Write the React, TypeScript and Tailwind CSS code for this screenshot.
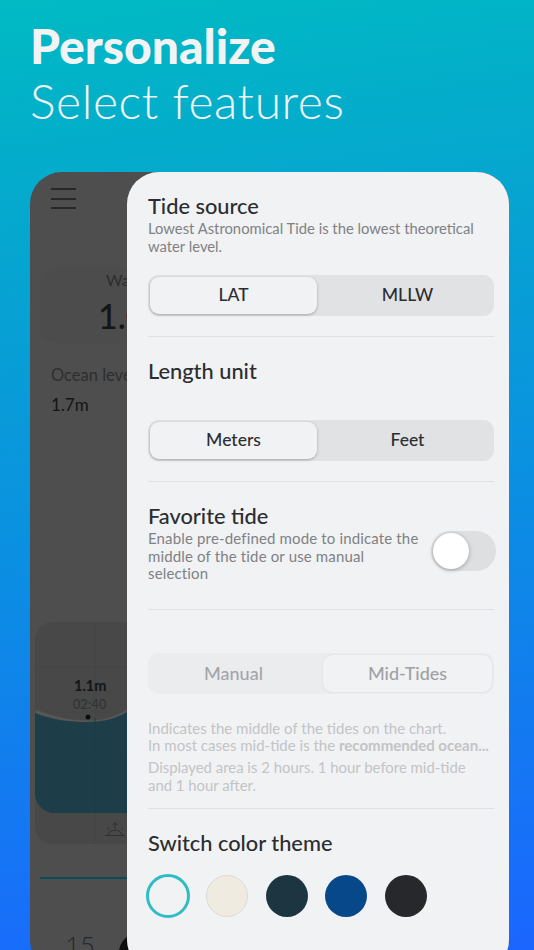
import React from "react";

function Segment({ left, right, active, dim }: { left: string; right: string; active: "left" | "right"; dim?: boolean }) {
  const on = dim
    ? "bg-[#f1f2f4] shadow-[0_0_2px_rgba(0,0,0,0.1)] text-[#9fa1a4] rounded-[9px]"
    : "bg-[#f1f2f4] shadow-[0_1px_3px_rgba(0,0,0,0.28)] text-[#2b2d30] rounded-[9px]";
  const off = dim ? "text-[#a3a5a8]" : "text-[#2b2d30]";
  return (
    <div className={`flex h-[41px] w-[346px] rounded-[11px] p-[2px] font-medium ${dim ? "bg-[#ebecee] text-[18px]" : "bg-[#e1e2e4] text-[17.500px]"}`}>
      <div className={`flex w-[167px] items-center justify-center ${active === "left" ? on : off}`}>{left}</div>
      <div className={`ml-[6px] flex flex-1 items-center justify-center ${active === "right" ? on : off}`}>{right}</div>
    </div>
  );
}

function Divider() {
  return <div className="h-[1px] w-[346px] bg-[#e0e1e3]" />;
}

export default function App() {
  return (
    <div className="h-[950px] w-[534px] overflow-hidden bg-[linear-gradient(172deg,#00bac3_0%,#05a9cd_20%,#0b8fe2_55%,#1b66ff_100%)] font-['Lato',sans-serif]">
      <div className="h-[172px] pl-[30px] pt-[19px] text-[#f2f3f5]">
        <div className="text-[48px] font-black leading-[54px]">Personalize</div>
        <div className="text-[48px] font-light leading-[56px] tracking-[0.6px]">Select features</div>
      </div>

      <div className="relative ml-[30px] h-[800px] w-[479px] rounded-[32px] bg-[#4d4e4d]">
        <div className="pl-[21px] pt-[16px]">
          <div className="flex w-[25px] flex-col gap-[7.5px]">
            <div className="h-[2px] bg-[#26282b]" />
            <div className="h-[2px] bg-[#26282b]" />
            <div className="h-[2px] bg-[#26282b]" />
          </div>
        </div>

        <div className="ml-[10px] mt-[58px] h-[76px] w-[180px] rounded-[16px] bg-[#4b4c4b] pl-[66px] pt-[3px]">
          <div className="whitespace-nowrap text-[16px] leading-[20px] text-[#2c2e30]">Water</div>
          <div className="-ml-[8px] mt-[8px] whitespace-nowrap text-[34px] font-medium leading-[36px] text-[#131517]">1.03m</div>
        </div>

        <div className="whitespace-nowrap pl-[21px] pt-[22px] text-[16.500px] leading-[20px] text-[#2c2e30]">Ocean level</div>
        <div className="pl-[21px] pt-[10px] text-[17px] leading-[20px] text-[#131517]">1.7m</div>

        <div className="relative ml-[5px] mt-[207px] h-[222px] w-[180px] overflow-hidden rounded-[18px] bg-[#474847]">
          <svg className="absolute left-0 top-0" width="180" height="222" viewBox="0 0 180 222" fill="none">
            <path d="M60 0V222M0 45H180M0 90H180M0 135H180" stroke="#454645" strokeWidth="1" />
            <path d="M0 90C18 97 35 101 52 101C70 101 82 97 92 90" stroke="#555655" strokeWidth="5" />
            <path d="M0 91C18 98 35 100 52 100C70 100 82 96 92 90V191H20C9 191 0 182 0 171Z" fill="#1d3d48" />
            <path d="M0 135H92M60 96V191" stroke="#1c3c47" strokeWidth="1" />
            <circle cx="53" cy="95" r="2.500" fill="#0c0d0e" />
            <path d="M70 213.500H90M73 213a7.500 7.500 0 0 1 14 0M80 207V201M77.500 203L80 200.500L82.500 203M72 206L74 207.500M88 206L86 207.500" stroke="#2c2e30" strokeWidth="0.9" />
          </svg>
          <div className="relative pl-[39px] pt-[55px] text-[14.500px] font-bold leading-[18px] text-[#131517]">1.1m</div>
          <div className="relative pl-[38px] pt-[1px] text-[12.500px] leading-[18px] tracking-[0.3px] text-[#2f3133]">02:40</div>
        </div>

        <div className="ml-[10px] mt-[33px] h-[2px] w-[170px] bg-[#0e4a5c]" />

        <div className="relative pl-[35px] pt-[53px] text-[26px] font-light leading-[26px] text-[#26282b]">
          15
          <div className="absolute left-[89px] top-[54px] h-[40px] w-[40px] rounded-full bg-[#0d0e10]" />
        </div>

        <div className="absolute bottom-0 left-[97px] right-0 top-0 rounded-[32px] bg-[#f1f2f4] pl-[21px] pt-[21px]">
          <div className="text-[21.800px] font-medium leading-[26px] text-[#2b2d30]">Tide source</div>
          <div className="w-[346px] text-[14.800px] leading-[18px] text-[#7f8184]">
            Lowest Astronomical Tide is the lowest theoretical water level.
          </div>
          <div className="pb-[20px] pt-[20px]">
            <Segment left="LAT" right="MLLW" active="left" />
          </div>
          <Divider />
          <div className="pb-[36px] pt-[21px] text-[21.800px] font-medium leading-[26px] text-[#2b2d30]">Length unit</div>
          <Segment left="Meters" right="Feet" active="left" />
          <div className="pt-[20px]">
            <Divider />
          </div>
          <div className="pt-[21px] text-[21.800px] font-medium leading-[26px] text-[#2b2d30]">Favorite tide</div>
          <div className="flex w-[348px] justify-between">
            <div className="w-[278px] pt-[1px] text-[15px] leading-[17.500px] tracking-[0.15px] text-[#7f8184]">
              Enable pre-defined mode to indicate the
              <br />
              middle of the tide or use manual
              <br />
              selection
            </div>
            <div className="mt-[2px] h-[40px] w-[65px] rounded-full bg-[#dedfe1] p-[2px]">
              <div className="h-[36px] w-[36px] rounded-full bg-white shadow-[0_1px_4px_rgba(0,0,0,0.3)]" />
            </div>
          </div>
          <div className="pt-[26.500px]">
            <Divider />
          </div>
          <div className="pb-[26px] pt-[43px]">
            <Segment left="Manual" right="Mid-Tides" active="right" dim />
          </div>
          <div className="w-[350px] whitespace-nowrap text-[15px] leading-[17px] text-[#c2c4c6]">
            Indicates the middle of the tides on the chart.
            <br />
            In most cases mid-tide is the <span className="font-bold">recommended ocean...</span>
          </div>
          <div className="w-[346px] pt-[4px] text-[14.900px] leading-[18px] text-[#c2c4c6]">
            Displayed area is 2 hours. 1 hour before mid-tide
            <br />
            and 1 hour after.
          </div>
          <div className="pt-[13.500px]">
            <Divider />
          </div>
          <div className="pt-[21.500px] text-[21.800px] font-medium leading-[26px] text-[#2b2d30]">Switch color theme</div>
          <div className="-ml-[2px] flex items-center gap-[18px] pt-[18px]">
            <div className="h-[44px] w-[44px] rounded-full border-[3px] border-[#2fbcc4]" />
            <div className="-ml-[2px] h-[42px] w-[42px] rounded-full border border-[#dedbd2] bg-[#f0ebe1]" />
            <div className="h-[42px] w-[42px] rounded-full bg-[#1d3540]" />
            <div className="-ml-[1px] h-[42px] w-[42px] rounded-full bg-[#07488a]" />
            <div className="h-[42px] w-[42px] rounded-full bg-[#26282c]" />
          </div>
        </div>
      </div>
    </div>
  );
}
